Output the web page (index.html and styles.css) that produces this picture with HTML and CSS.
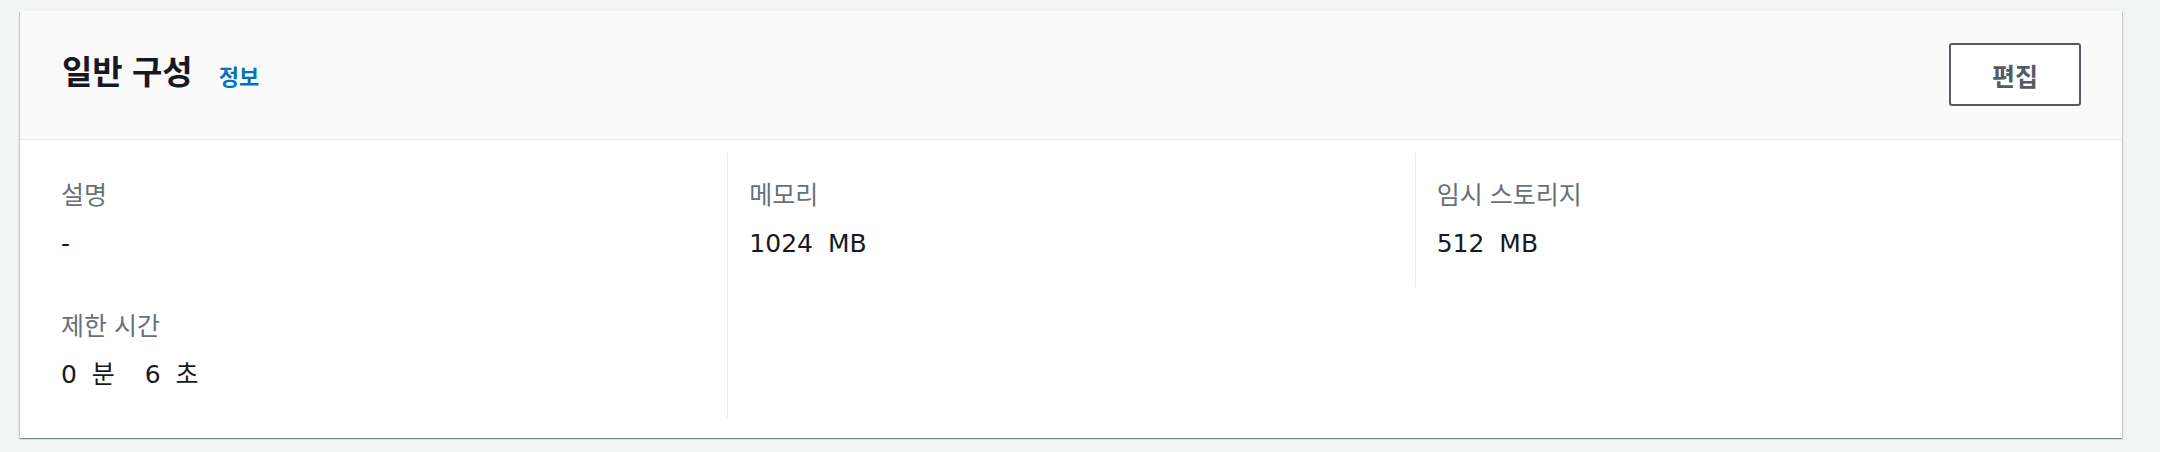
FILE: index.html
```html
<!DOCTYPE html>
<html lang="ko">
<head>
    <meta charset="UTF-8">
    <title>일반 구성</title>
    <link rel="stylesheet" href="styles.css">
</head>
<body>
    <div class="card">
        <div class="card-header">
            <div class="title">
                <h2>일반 구성</h2>
                <a class="info" href="#">정보</a>
            </div>
            <button class="btn">편집</button>
        </div>
        <div class="card-body">
            <div class="col">
                <div class="item">
                    <div class="label">설명</div>
                    <div class="value">-</div>
                </div>
                <div class="item">
                    <div class="label">제한 시간</div>
                    <div class="value">0 분&nbsp; 6 초</div>
                </div>
            </div>
            <div class="col col-full">
                <div class="item">
                    <div class="label">메모리</div>
                    <div class="value">1024 MB</div>
                </div>
            </div>
            <div class="col">
                <div class="item">
                    <div class="label">임시 스토리지</div>
                    <div class="value">512 MB</div>
                </div>
            </div>
        </div>
    </div>
</body>
</html>
```

FILE: styles.css
```css
*{margin: 0;padding: 0;box-sizing: border-box;}
a{text-decoration: none;}
body{background: #f2f3f3;padding: 11px 38px 15px 20px;font-family: "Noto Sans CJK KR", sans-serif;color: #16191f;}

.card{background: #fff;box-shadow: 0 1px 1px 0 rgba(0,28,36,.3), 1px 1px 1px 0 rgba(0,28,36,.15), -1px 1px 1px 0 rgba(0,28,36,.15);}

.card-header{display: flex;align-items: center;justify-content: space-between;padding: 32px 41px 33px 42px;background: #fafafa;border-bottom: 1px solid #eaeded;}
.title{display: flex;align-items: center;}
.title h2{font-size: 33px;font-weight: 700;line-height: 40px;color: #16191f;margin-top: -9px;}
.info{font-size: 22px;font-weight: 700;color: #0073bb;margin-left: 26px;line-height: 30px;}

.btn{width: 132px;height: 63px;border: 2px solid #545b64;border-radius: 3px;background: #fff;color: #545b64;font-family: "Noto Sans CJK KR", sans-serif;font-size: 25px;font-weight: 700;cursor: pointer;}

.card-body{display: grid;grid-template-columns: 1fr 1fr 1fr;align-items: start;padding: 13px 20px 20px 20px;}
.col{padding: 20px 21px 23px 21px;display: flex;flex-direction: column;gap: 40px;}
.col + .col{border-left: 1px solid #eaeded;}
.col-full{align-self: stretch;}

.label{font-size: 25px;line-height: 40px;color: #687078;margin-bottom: 11px;}
.value{font-family: "DejaVu Sans", "Noto Sans CJK KR", sans-serif;font-size: 25px;line-height: 40px;word-spacing: 7px;color: #16191f;}
```
